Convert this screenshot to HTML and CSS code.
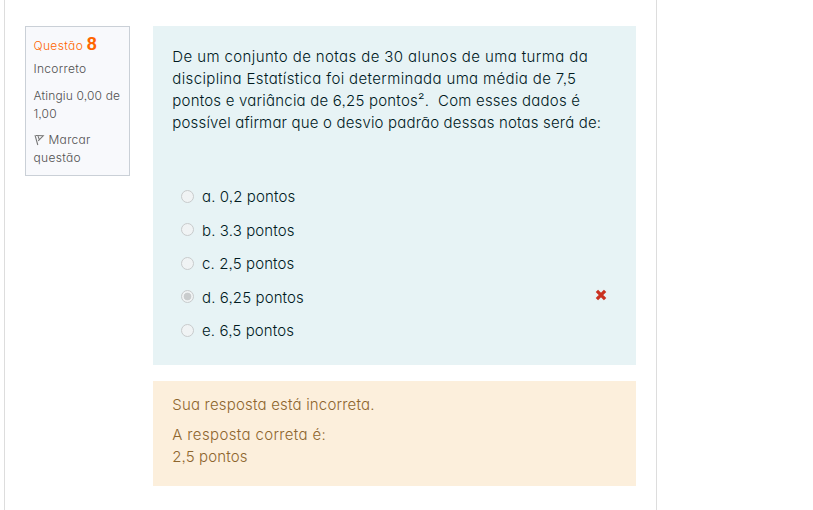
FILE: index.html
```html
<!DOCTYPE html>
<html lang="pt-BR">
<head>
<meta charset="utf-8">
<title>Questão 8</title>
<link rel="stylesheet" href="styles.css">
</head>
<body>
<main class="page">
  <aside class="info">
    <h3 class="number">Questão <b>8</b></h3>
    <p class="state">Incorreto</p>
    <p class="grade">Atingiu 0,00 de<br>1,00</p>
    <p class="flag"><svg class="flag-icon" viewBox="0 0 11 12"><path d="M1 1.2 3.8 11M2 1.5 9.2 1.8 4.2 6.8M4 2l1.2 3.4" fill="none" stroke="#777" stroke-width="1.1"/></svg>Marcar<br>questão</p>
  </aside>
  <div class="content">
    <section class="formulation">
      <p class="prompt"><span class="l1">De um conjunto de notas de 30 alunos de uma turma da</span><br><span class="l2">disciplina Estatística foi determinada uma média de 7,5</span><br><span class="l3">pontos e variância de 6,25 pontos².&nbsp; Com esses dados é</span><br><span class="l4">possível afirmar que o desvio padrão dessas notas será de:</span></p>
      <ul class="answers">
        <li><i class="radio"></i><span>a. 0,2 pontos</span></li>
        <li><i class="radio"></i><span>b. 3.3 pontos</span></li>
        <li><i class="radio"></i><span>c. 2,5 pontos</span></li>
        <li><i class="radio checked"></i><span>d. 6,25 pontos</span><svg class="wrong" viewBox="0 0 12 12"><path d="M1.9 1.9 10.1 10.1M10.1 1.9 1.9 10.1" stroke="#ca3120" stroke-width="3.3"/></svg></li>
        <li><i class="radio"></i><span>e. 6,5 pontos</span></li>
      </ul>
    </section>
    <section class="feedback">
      <p class="f1">Sua resposta está incorreta.</p>
      <p class="f2"><span class="f2-label">A resposta correta é:</span><br><span>2,5 pontos</span></p>
    </section>
  </div>
</main>
</body>
</html>
```
FILE: styles.css
```css
* { box-sizing: border-box; }
body {
  margin: 0;
  background: #fff;
  font: 300 15px/22px Inter, "Century Gothic", sans-serif;
  font-feature-settings: "cv11", "ss03";
  overflow: hidden;
}
p, h3, ul { margin: 0; padding: 0; }
.page {
  display: flex;
  align-items: flex-start;
  gap: 23px;
  width: 653px;
  height: 510px;
  margin-left: 4px;
  padding: 26px 20px 0;
  border: solid #ddd;
  border-width: 0 1px;
}
.info {
  width: 105px;
  height: 150px;
  padding: 8px 0 0 7.5px;
  border: 1px solid #cad0d7;
  background: #f8f9fc;
  color: #505050;
  font-size: 12px;
  line-height: 18px;
  letter-spacing: 0.15px;
  white-space: nowrap;
}
.number { font-size: 12px; font-weight: 300; line-height: 20px; letter-spacing: 0.35px; color: #ff6500; }
.number b { font: 700 18px/18px "Liberation Sans", sans-serif; letter-spacing: 0; }
.state { margin-top: 4px; letter-spacing: 0.3px; }
.grade { margin-top: 9px; }
.flag { margin-top: 8px; letter-spacing: 0.3px; }
.flag-icon { width: 11px; height: 12px; margin-right: 4px; vertical-align: -2px; }
.content { width: 483px; }
.formulation { height: 339px; padding: 20px 19px 0 19.3px; background: #e7f3f5; color: #001a1e; }
.prompt { white-space: nowrap; }
.l1 { letter-spacing: 0.39px; }
.l2 { letter-spacing: 0.36px; }
.l3 { letter-spacing: 0.21px; }
.l4 { letter-spacing: 0.17px; }
.answers { display: flex; flex-direction: column; gap: 11.5px; margin-top: 52px; list-style: none; letter-spacing: 0.12px; }
.answers li { display: flex; align-items: center; height: 22px; padding-left: 8.7px; }
.radio { width: 13px; height: 13px; margin: -2px 8px 0 0; border: 1px solid #c8cbcc; border-radius: 50%; background: #f0f3f4; }
.checked { background: radial-gradient(circle, #c9cccd 0 3.5px, #f0f3f4 4.2px); }
.wrong { width: 12px; height: 12px; margin: -5px 10px 0 auto; }
.feedback { height: 105px; margin-top: 16px; padding: 13px 19.3px; background: #fcefdc; color: #8e662e; }
.f1 { letter-spacing: 0.19px; }
.f2 { margin-top: 8px; letter-spacing: 0.12px; }
.f2-label { letter-spacing: 0.36px; }
```
